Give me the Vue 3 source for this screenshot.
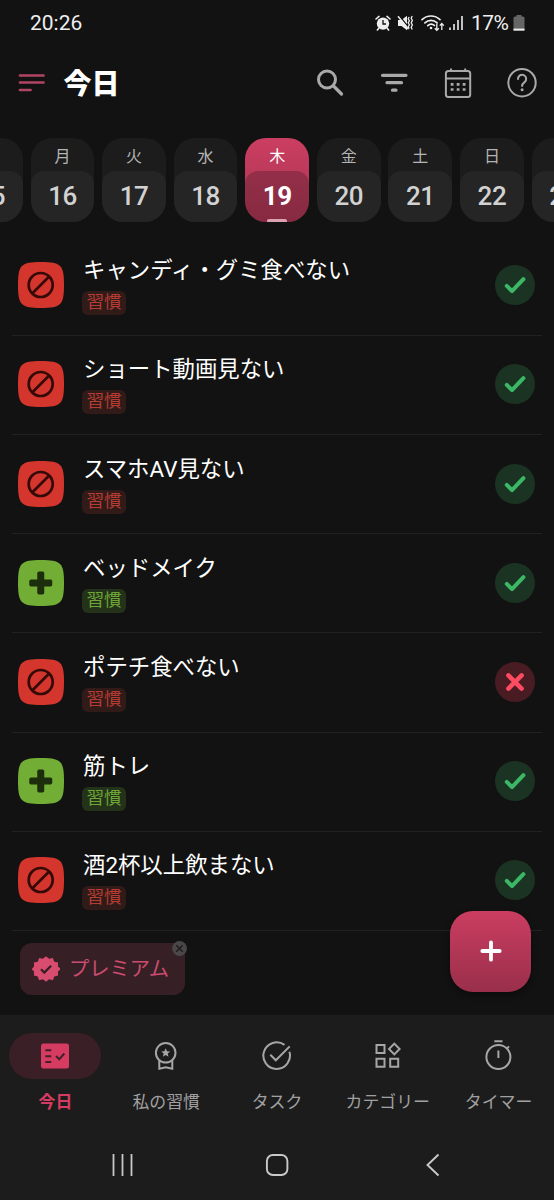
<script setup>
import { ref } from 'vue';

const days = ref([
  { name: '日', date: 15 },
  { name: '月', date: 16 },
  { name: '火', date: 17 },
  { name: '水', date: 18 },
  { name: '木', date: 19 },
  { name: '金', date: 20 },
  { name: '土', date: 21 },
  { name: '日', date: 22 },
  { name: '月', date: 23 },
]);
const selectedDate = ref(19);

const habits = ref([
  { id: 1, title: 'キャンディ・グミ食べない', type: 'quit', done: true },
  { id: 2, title: 'ショート動画見ない', type: 'quit', done: true },
  { id: 3, title: 'スマホAV見ない', type: 'quit', done: true },
  { id: 4, title: 'ベッドメイク', type: 'build', done: true },
  { id: 5, title: 'ポテチ食べない', type: 'quit', done: false },
  { id: 6, title: '筋トレ', type: 'build', done: true },
  { id: 7, title: '酒2杯以上飲まない', type: 'quit', done: true },
]);

const tabs = [
  { id: 'today', label: '今日' },
  { id: 'habits', label: '私の習慣' },
  { id: 'tasks', label: 'タスク' },
  { id: 'categories', label: 'カテゴリー' },
  { id: 'timer', label: 'タイマー' },
];
const activeTab = ref('today');
const showPremium = ref(true);

const toggle = (habit) => {
  habit.done = !habit.done;
};
</script>

<template>
  <div class="app">
    <div class="status-bar">
      <span class="clock">20:26</span>
      <div class="status-icons">
        <svg class="alarm" width="16" height="16" viewBox="0 0 16 16">
          <circle cx="8" cy="8.6" r="6.2" fill="#eee" />
          <path d="M1 4l3-2.6M15 4l-3-2.6M3.6 13.4L2.4 15M12.4 13.4l1.2 1.6" stroke="#eee" stroke-width="1.6" stroke-linecap="round" />
          <path d="M8 5v4h3" fill="none" stroke="#121212" stroke-width="1.3" />
        </svg>
        <svg class="mute" width="17" height="16" viewBox="0 0 17 16">
          <path d="M1 5h3.5L10 .8v14.4L4.5 11H1z" fill="#eee" />
          <path d="M2 .4l9 11" stroke="#121212" stroke-width="1.4" />
          <path d="M1 1.2l10.5 13" stroke="#eee" stroke-width="1.4" />
          <path d="M12.2 2l-1 1.8 1.2 2-1.2 2 1.2 2-1.2 2 1 1.8M15.2 1l-1 2.2 1.2 2.2-1.2 2.4 1.2 2.3-1.2 2.2 1 2.3" fill="none" stroke="#eee" stroke-width="1.3" />
        </svg>
        <svg class="wifi" width="24" height="18" viewBox="0 0 24 18">
          <path d="M1 5.6a13 13 0 0 1 18 0M3.9 8.8a9 9 0 0 1 12.2 0M6.8 11.6a5 5 0 0 1 6.6-.2" fill="none" stroke="#eee" stroke-width="1.7" stroke-linecap="round" />
          <circle cx="10" cy="14" r="1.3" fill="#eee" />
          <path d="M15.8 9.8v6.4m-2-2l2 2.2 2-2.2M20.8 16V9.6m-2 2l2-2.2 2 2.2" fill="none" stroke="#eee" stroke-width="1.3" />
        </svg>
        <svg class="signal" width="14" height="16" viewBox="0 0 14 16">
          <path d="M1 12.5V15M5 9v6M9 5v10M13 1v14" stroke="#eee" stroke-width="1.6" />
        </svg>
        <span class="percent">17%</span>
        <svg class="battery" width="12" height="16" viewBox="0 0 12 16">
          <path d="M3.5 0h5v1.5H10A1.5 1.5 0 0 1 11.5 3v12.5H.5V3A1.5 1.5 0 0 1 2 1.5h1.5z" fill="#666" />
          <path d="M.5 13.6h11v2H.5z" fill="#eee" />
        </svg>
      </div>
    </div>

    <header class="header">
      <svg class="menu" width="28" height="20" viewBox="0 0 28 20">
        <path d="M3 2.5h23.5M3 9.5h23.5M3 17h10.5" stroke="#b34563" stroke-width="2.7" stroke-linecap="round" />
      </svg>
      <h1>今日</h1>
      <div class="actions">
        <svg width="32" height="32" viewBox="0 0 32 32">
          <circle cx="13" cy="12.5" r="8.5" fill="none" stroke="#a9a9a9" stroke-width="3" />
          <path d="M19.5 19l8 8" stroke="#a9a9a9" stroke-width="3.2" stroke-linecap="round" />
        </svg>
        <svg width="32" height="32" viewBox="0 0 32 32">
          <path d="M4.5 8.3H28M9 15.7h14.5M14.5 23.2H18" stroke="#a9a9a9" stroke-width="3.2" stroke-linecap="round" />
        </svg>
        <svg width="32" height="32" viewBox="0 0 32 32">
          <rect x="3.9" y="4" width="24.3" height="26" rx="2.5" fill="none" stroke="#a9a9a9" stroke-width="2" />
          <path d="M4 11.5h24M9 1.5V4M23.2 1.5V4" stroke="#a9a9a9" stroke-width="2" />
          <path d="M8.7 17.3h2.8M14.7 17.3h2.8M20.7 17.3h2.8M8.7 22.5h2.8M14.7 22.5h2.8M20.7 22.5h2.8" stroke="#a9a9a9" stroke-width="2.7" />
        </svg>
        <svg width="32" height="32" viewBox="0 0 32 32">
          <circle cx="16" cy="15.7" r="13.7" fill="none" stroke="#a9a9a9" stroke-width="2" />
          <path d="M12 12a4.1 4.1 0 1 1 6.6 3.1c-1.700 1.3-2.5 2-2.5 3.800" fill="none" stroke="#a9a9a9" stroke-width="2" stroke-linecap="round" />
          <circle cx="16.1" cy="22.7" r="1.5" fill="#a9a9a9" />
        </svg>
      </div>
    </header>

    <div class="days">
      <div
        v-for="day in days"
        :key="day.date"
        class="day"
        :class="{ selected: day.date === selectedDate }"
        @click="selectedDate = day.date"
      >
        <div class="day-name">{{ day.name }}</div>
        <div class="day-date">{{ day.date }}</div>
      </div>
    </div>

    <main class="habit-list">
      <div v-for="habit in habits" :key="habit.id" class="habit" :class="habit.type">
        <svg class="habit-icon" width="46" height="46" viewBox="0 0 46 46">
          <path class="habit-shape" d="M0 23C0 3 3 0 23 0s23 3 23 23-3 23-23 23S0 43 0 23z" />
          <g v-if="habit.type === 'quit'" fill="none" stroke="#350a06" stroke-width="2.7">
            <circle cx="22.7" cy="23" r="12" />
            <path d="M14.2 31.5l17-17" />
          </g>
          <path v-else d="M21 13.3h3.5v8h8v3.5h-8v8H21v-8h-8v-3.5h8z" fill="#1c2e0c" stroke="#1c2e0c" stroke-width="3.5" stroke-linejoin="round" />
        </svg>
        <div class="habit-info">
          <div class="habit-title">{{ habit.title }}</div>
          <div class="habit-tag">習慣</div>
        </div>
        <button class="mark" :class="{ missed: !habit.done }" @click="toggle(habit)">
          <svg width="40" height="40" viewBox="0 0 40 40">
            <path v-if="habit.done" d="M11.8 20.9l5.2 5.2 11.400-11.900" />
            <path v-else d="M13.4 13.4l13.2 13.2M26.6 13.4L13.4 26.6" />
          </svg>
        </button>
      </div>
    </main>

    <div class="bottom-area">
      <div v-if="showPremium" class="premium">
        <svg width="28" height="28" viewBox="0 0 28 28">
          <path d="M14 .7l3.2 2.6 4-.9 1.4 3.9 4 1-.1 4.2 3 2.5-3 2.7.1 4.1-4 1-1.4 3.9-4-.9L14 27.3l-3.2-2.5-4 .9-1.4-3.9-4-1 .1-4.1L-1 14l2.5-2.5-.1-4.2 4-1 1.4-3.9 4 .9z" transform="translate(.6 .6) scale(.957)" fill="#d84c70" />
          <path d="M9 14.3l3.3 3.3 6.8-6.8" fill="none" stroke="#371f26" stroke-width="2.2" />
        </svg>
        <span>プレミアム</span>
        <svg class="premium-close" width="15" height="15" viewBox="0 0 15 15" @click="showPremium = false">
          <circle cx="7.5" cy="7.5" r="7.4" fill="#4b4748" />
          <path d="M4.3 4.3l6.4 6.4M10.7 4.3l-6.4 6.4" stroke="#1f1c1d" stroke-width="1.5" />
        </svg>
      </div>
      <button class="fab">
        <svg width="24" height="24" viewBox="0 0 24 24">
          <path d="M12 3.3v17.4M3.3 12h17.4" stroke="#fff" stroke-width="3.8" stroke-linecap="round" />
        </svg>
      </button>
    </div>

    <nav class="tab-bar">
      <div
        v-for="tab in tabs"
        :key="tab.id"
        class="tab"
        :class="{ active: tab.id === activeTab }"
        @click="activeTab = tab.id"
      >
        <div class="tab-icon">
          <svg width="32" height="32" viewBox="0 0 32 32" fill="none" stroke="#a6a6a6" stroke-width="2">
            <template v-if="tab.id === 'today'">
              <rect x="2" y="3.5" width="28" height="25" rx="2.5" fill="#d63c62" stroke="none" />
              <path d="M6.3 10.3h6M6.3 16.2h6M6.3 21.9h6M17 16l3.2 3.2 5.2-5.7" stroke="#43202a" />
            </template>
            <template v-else-if="tab.id === 'habits'">
              <circle cx="15.7" cy="12.8" r="9.8" />
              <path d="M9.3 20.5v8.2l6.5-1.5 6.5 1.5v-8.2" />
              <path d="M15.7 8.3l1.3 3 3.2.2-2.5 2.1.8 3.2-2.8-1.7-2.8 1.7.8-3.2-2.5-2.1 3.2-.2z" fill="#a6a6a6" stroke="none" />
            </template>
            <template v-else-if="tab.id === 'tasks'">
              <path d="M23.5 4.9A13.3 13.3 0 1 0 28.4 11.8" />
              <path d="M9.3 14.8l5.5 5.5L28.7 6.4" />
            </template>
            <template v-else-if="tab.id === 'categories'">
              <path d="M4.5 5h8v8h-8zM4.5 18.8h8v8h-8zM18.2 18.8h8v8h-8zM22.3 3.6L27.6 9l-5.3 5.4L17 9z" />
            </template>
            <template v-else>
              <circle cx="15.4" cy="17" r="12" />
              <path d="M11.3 1.2h8.2M15.4 10.5V18M23.7 8.7L26 6.4" />
            </template>
          </svg>
        </div>
        <div class="tab-label">{{ tab.label }}</div>
      </div>
    </nav>

    <div class="system-nav">
      <svg width="24" height="24" viewBox="0 0 24 24">
        <path d="M3.5 1v22M12.500 1v22M21.500 1v22" stroke="#c9c9c9" stroke-width="1.8" />
      </svg>
      <svg width="24" height="24" viewBox="0 0 24 24">
        <rect x="1.9" y="2" width="20.5" height="20" rx="6" fill="none" stroke="#c9c9c9" stroke-width="1.9" />
      </svg>
      <svg width="24" height="24" viewBox="0 0 24 24">
        <path d="M17.5 1.5L6.5 12l11 10.5" fill="none" stroke="#c9c9c9" stroke-width="1.9" />
      </svg>
    </div>
  </div>
</template>

<style>
body {
  background: #121212;
}
</style>

<style scoped>
.app {
  width: 554px;
  height: 1200px;
  display: flex;
  flex-direction: column;
  overflow: hidden;
  background: #121212;
  color: #fff;
  font-family: Roboto, "Noto Sans CJK JP", sans-serif;
}

svg {
  display: block;
  flex-shrink: 0;
}

button {
  border: none;
  padding: 0;
  cursor: pointer;
}

.status-bar {
  height: 46px;
  padding: 0 29.5px 0 30px;
  display: flex;
  align-items: center;
  justify-content: space-between;
  font-size: 21px;
  line-height: 24px;
  color: #eee;
}

.status-icons {
  display: flex;
  align-items: center;
}

.mute {
  margin-left: 6px;
}

.wifi {
  margin-left: 7px;
}

.signal {
  margin-left: 4px;
}

.percent {
  margin-left: 8px;
  letter-spacing: -0.5px;
}

.battery {
  margin-left: 4px;
}

.header {
  height: 74px;
  padding: 0 16px 0 17px;
  display: flex;
  align-items: center;
}

.header h1 {
  margin: 3px 0 0 18.5px;
  font-size: 28px;
  line-height: 36px;
  font-weight: 900;
}

.actions {
  display: flex;
  gap: 32px;
  margin-left: auto;
}

.days {
  height: 84px;
  margin: 18px 0 14.6px -41px;
  display: flex;
  gap: 7.9px;
}

.day {
  flex: 0 0 63.7px;
  display: flex;
  flex-direction: column;
  position: relative;
  overflow: hidden;
  border-radius: 21px;
  background: #1c1c1c;
  text-align: center;
}

.day-name {
  height: 33px;
  font-size: 16px;
  line-height: 37px;
  color: #b5b5b5;
}

.day-date {
  flex: 1;
  border-radius: 13px 13px 0 0;
  background: #252525;
  font-size: 26px;
  line-height: 50px;
  font-weight: 500;
  letter-spacing: -0.5px;
  color: #d2d2d2;
}

.day.selected {
  background: linear-gradient(#cb3e62, #a83350);
}

.day.selected .day-name {
  color: #fff;
}

.day.selected .day-date {
  background: rgba(70, 25, 38, 0.34);
  font-weight: 700;
  color: #fff;
}

.day.selected::after {
  content: "";
  position: absolute;
  left: 22px;
  bottom: 0;
  width: 20px;
  height: 3px;
  border-radius: 2px 2px 0 0;
  background: #dba1b0;
}

.habit {
  height: 99.2px;
  margin: 0 12px;
  padding: 0 7px 0 6px;
  box-sizing: border-box;
  display: flex;
  align-items: center;
  border-bottom: 1px solid #222;
}

.habit-icon,
.mark {
  margin-bottom: 1px;
}

.quit .habit-shape {
  fill: #d4362d;
}

.build .habit-shape {
  fill: #72ae35;
}

.habit-info {
  flex: 1;
  margin: -2px 0 0 18px;
}

.habit-title {
  padding-left: 1px;
  height: 37px;
  font-size: 22.4px;
  line-height: 33px;
}

.habit-tag {
  width: 44px;
  height: 24px;
  border-radius: 6px;
  font-size: 17.6px;
  line-height: 23px;
  text-align: center;
}

.quit .habit-tag {
  background: #311b19;
  color: #b53b33;
}

.build .habit-tag {
  background: #24321a;
  color: #6ca635;
}

.mark {
  width: 40px;
  height: 40px;
  border-radius: 50%;
  background: #1b3323;
}

.mark path {
  fill: none;
  stroke: #3bb765;
  stroke-width: 4;
  stroke-linecap: round;
  stroke-linejoin: round;
}

.mark.missed {
  background: #481c22;
}

.mark.missed path {
  stroke: #ff4b61;
  stroke-width: 4.5;
}

.bottom-area {
  flex: 1;
  position: relative;
  display: flex;
  align-items: flex-start;
  padding: 12px 20px 0;
}

.premium {
  position: relative;
  width: 165px;
  height: 52px;
  padding-left: 12px;
  box-sizing: border-box;
  display: flex;
  align-items: center;
  gap: 9px;
  border-radius: 12px;
  background: #371f26;
  font-size: 20.3px;
  line-height: 28px;
  color: #cb4c6e;
}

.premium-close {
  position: absolute;
  right: -1.5px;
  top: -2px;
}

.fab {
  position: absolute;
  right: 23px;
  top: -20px;
  width: 81px;
  height: 81px;
  display: flex;
  align-items: center;
  justify-content: center;
  border-radius: 23px;
  background: linear-gradient(#cb3d61, #992f4a);
  box-shadow: 0 3px 6px rgba(0, 0, 0, 0.4);
}

.tab-bar {
  height: 115px;
  padding-top: 18px;
  box-sizing: border-box;
  display: flex;
  background: #1c1c1c;
}

.tab {
  flex: 1;
  display: flex;
  flex-direction: column;
  align-items: center;
}

.tab-icon {
  width: 92px;
  height: 46px;
  display: flex;
  align-items: center;
  justify-content: center;
  border-radius: 23px;
}

.tab-label {
  margin-top: 11px;
  font-size: 16.9px;
  line-height: 25px;
  color: #a0a0a0;
  white-space: nowrap;
}

.tab.active .tab-icon {
  background: #3a1f27;
}

.tab.active .tab-label {
  font-weight: 700;
  color: #d63c62;
}

.system-nav {
  height: 70px;
  padding: 0 109.5px 0 110px;
  display: flex;
  align-items: center;
  justify-content: space-between;
  background: #1c1c1c;
}
</style>
